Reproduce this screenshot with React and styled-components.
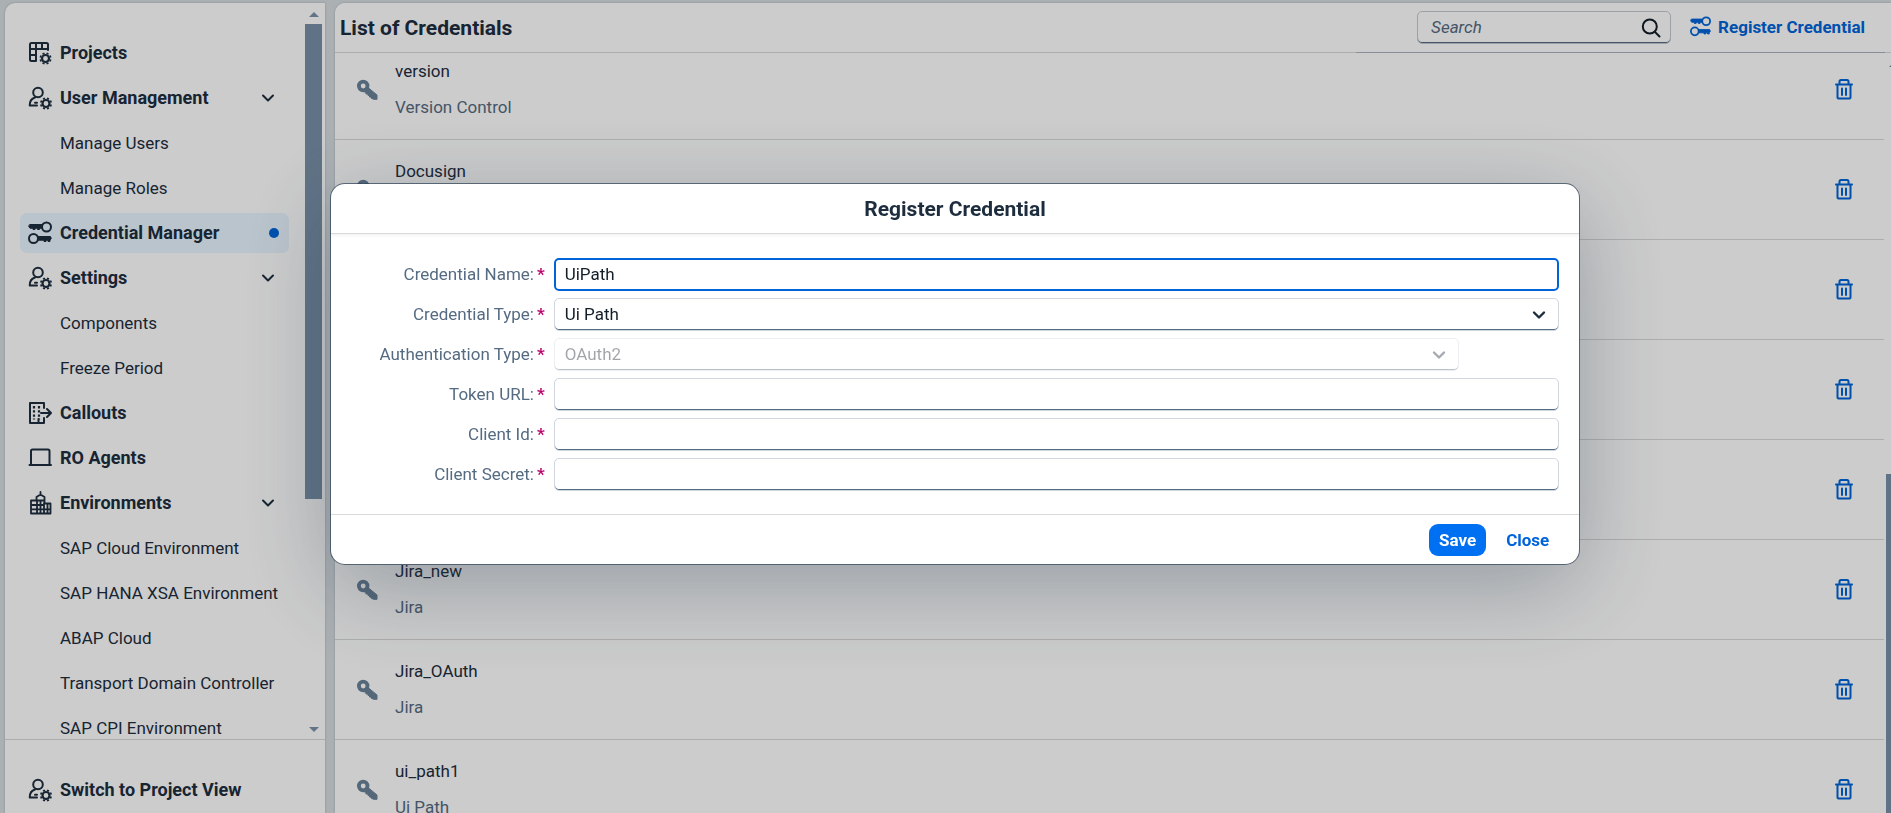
import React from "react";
import styled, { createGlobalStyle, css } from "styled-components";

const GlobalStyle = createGlobalStyle`
  *, *::before, *::after { box-sizing: border-box; }
  body {
    margin: 0;
    background: #d6dce0;
    color: #1d2d3e;
    font-family: Roboto, "Liberation Sans", sans-serif;
    font-size: 17px;
    line-height: 20px;
  }
  button, input, select { font: inherit; color: inherit; }
  ul { list-style: none; margin: 0; padding: 0; }
  h1, h2 { margin: 0; }
`;

/* ---------- icons ---------- */

const Svg = styled.svg`
  display: block;
  flex: none;
  width: ${(p) => p.$w || 24}px;
  height: ${(p) => p.$h || p.$w || 24}px;
  fill: none;
  stroke: currentColor;
  stroke-width: 2;
  stroke-linecap: round;
  stroke-linejoin: round;
`;

const Gear = ({ cx, cy }) => (
  <g transform={`translate(${cx} ${cy})`}>
    <circle r="3.5" strokeWidth="2.200" />
    <path
      strokeWidth="2.200"
      strokeLinecap="butt"
      d="M1.7 -4.1L2.3 -5.6M4.1 -1.7L5.6 -2.3M4.1 1.7L5.6 2.3M1.7 4.1L2.3 5.6M-1.7 4.1L-2.3 5.6M-4.1 1.7L-5.6 2.3M-4.1 -1.7L-5.6 -2.3M-1.7 -4.1L-2.3 -5.6"
    />
  </g>
);

const ProjectsIcon = () => (
  <Svg viewBox="0 0 24 24" aria-hidden="true">
    <path d="M8 20H3.500Q2 20 2 18.500V3.500Q2 2 3.500 2H18.500Q20 2 20 3.500V9M2 8H20M8 2V20M14 2V8M2 14H8" />
    <Gear cx={17.5} cy={17.5} />
  </Svg>
);

const UserIcon = () => (
  <Svg viewBox="0 0 24 24" aria-hidden="true">
    <circle cx="10" cy="6.500" r="4.800" />
    <path d="M7 11.500Q1.700 13 1.700 19.500H9M7 16.800H9" />
    <Gear cx={18} cy={17.5} />
  </Svg>
);

const KeysIcon = ({ size }) => (
  <Svg $w={size} viewBox="0 0 24 24" aria-hidden="true">
    <circle cx="18.500" cy="6" r="4.500" />
    <path fill="currentColor" strokeWidth="1" d="M2 3.500H14V7.200H11.500V8.500H9.500V7.200H7V8.500H5V7.200H2L.8 5.500Z" />
    <circle cx="5.500" cy="17.500" r="4.500" />
    <path fill="currentColor" strokeWidth="1" d="M10 15.500H22.500L23.300 17.500L22 19V20.500H20V19.200H18V20.500H16V19.200H10Z" />
  </Svg>
);

const CalloutsIcon = () => (
  <Svg viewBox="0 0 24 24" aria-hidden="true">
    <path d="M16 7V2H2V22H16V17M10.500 22V18M13 12H23M19 8L23 12L19 16" />
    <path strokeWidth="2.200" strokeDasharray="2.400 1.800" strokeLinecap="butt" d="M6 5V18.500M11 5V18.500" />
  </Svg>
);

const LaptopIcon = () => (
  <Svg viewBox="0 0 24 24" aria-hidden="true">
    <path d="M3 19V5Q3 3.500 4.500 3.500H20Q21.500 3.500 21.500 5V19M1.500 19H23" />
  </Svg>
);

const BuildingIcon = () => (
  <Svg viewBox="0 0 24 24" aria-hidden="true">
    <path d="M3 22.500V9.500H8.500V6L12.500 3.500L16.500 6V12.500H22.500V22.500ZM12.500 1V4M3 14H16M3 18.300H22.500M9 10V22M16 12V22M12.500 10V22M9 9.500H16M19.500 13V22" strokeWidth="1.800" />
  </Svg>
);

const ChevronIcon = ({ bold }) => (
  <Svg $w={14} $h={14} viewBox="0 0 14 14" aria-hidden="true">
    <path strokeWidth={bold ? 2.4 : 2} d="M2 4.500L7 9.500L12 4.500" />
  </Svg>
);

const KeyIcon = () => (
  <Svg $w={22} viewBox="0 0 22 22" aria-hidden="true">
    <circle cx="7.200" cy="8" r="4.300" strokeWidth="3.800" />
    <path fill="currentColor" strokeWidth="1" d="M8.500 12.800L12 9.500L21 17V21.300H17.500L15 20V19H13.500V17.500H12V16H10.500Z" />
  </Svg>
);

const TrashIcon = () => (
  <Svg $w={20} $h={22} viewBox="0 0 20 22" aria-hidden="true">
    <path d="M2 6.500H18M3.500 6.500V19.500Q3.500 20.500 4.500 20.500H15.500Q16.500 20.500 16.500 19.500V6.500M5.500 6V3.500Q5.500 2 7 2H13Q14.500 2 14.500 3.500V6M8 10.500V17M12 10.500V17" />
  </Svg>
);

const SearchIcon = () => (
  <Svg $w={20} viewBox="0 0 20 20" aria-hidden="true">
    <circle cx="8.800" cy="8.500" r="7" />
    <path d="M14 14L18.500 18.500" />
  </Svg>
);

/* ---------- page shell ---------- */

const Shell = styled.div`
  display: flex;
  gap: 10px;
  height: 100vh;
  padding: 3px 0 0 5px;
  overflow: hidden;
`;

const Sidebar = styled.nav`
  display: flex;
  flex-direction: column;
  flex: none;
  width: 320px;
  background: #fff;
  border-radius: 10px 0 0 0;
  box-shadow: 0 0 2px rgba(34, 53, 72, 0.3);
`;

const SideScroll = styled.div`
  display: flex;
  flex: 1;
  min-height: 0;
  overflow: hidden;
`;

const NavList = styled.ul`
  display: flex;
  flex-direction: column;
  gap: 5px;
  flex: 1;
  min-width: 0;
  padding: 30px 16px 0 15px;
`;

const NavLink = styled.a`
  display: flex;
  align-items: center;
  gap: 8px;
  height: 40px;
  padding: ${(p) => (p.$sub ? "0 0 0 40px" : "0 14px 0 8px")};
  border-radius: 7px;
  color: inherit;
  text-decoration: none;
  white-space: nowrap;
  font-size: ${(p) => (p.$sub ? 17 : 18)}px;
  font-weight: ${(p) => (p.$sub ? 400 : 700)};
  background: ${(p) => (p.$active ? "#e9f5ff" : "transparent")};
`;

const NavText = styled.span`
  flex: 1;
`;

const Dot = styled.span`
  width: 10px;
  height: 10px;
  margin-right: -4px;
  border-radius: 50%;
  background: #0064d9;
`;

const SideFooter = styled.div`
  flex: none;
  height: 74px;
  padding: 30px 15px 0;
  border-top: 1px solid #d9d9d9;
`;

const ScrollBar = styled.div`
  display: flex;
  flex-direction: column;
  align-items: center;
  flex: none;
  width: 20px;
  padding: 9px 3px 7px 0;
`;

const EdgeScrollBar = styled.div`
  display: flex;
  flex-direction: column;
  align-items: flex-start;
  flex: none;
  width: 5px;
  margin-left: 2px;
  padding-top: 9px;
  overflow: hidden;
`;

const Arrow = styled.span`
  flex: none;
  margin-left: ${(p) => (p.$inset || 0)}px;
  border: 5px solid transparent;
  border-top-width: ${(p) => (p.$down ? 5 : 0)}px;
  border-bottom-width: ${(p) => (p.$down ? 0 : 5)}px;
  border-${(p) => (p.$down ? "top" : "bottom")}-color: #7b91a8;
`;

const Thumb = styled.span`
  width: 17px;
  height: 66%;
  margin: 7px 0 auto;
  background: #7990a8;
`;

const LowerThumb = styled.span`
  width: 100%;
  flex: 1;
  margin-top: 407px;
  background: #7990a8;
`;

const Main = styled.main`
  display: flex;
  flex-direction: column;
  flex: 1;
  min-width: 0;
  background: #fff;
  border-radius: 10px 0 0 0;
  overflow: hidden;
  box-shadow: 0 0 2px rgba(34, 53, 72, 0.3);
`;

const MainHeader = styled.header`
  position: relative;
  z-index: 1;
  display: flex;
  align-items: center;
  flex: none;
  height: 50px;
  padding: 0 26px 0 5px;
  background: #fff;
  border-bottom: 1px solid #d9d9d9;
  &::after {
    content: "";
    position: absolute;
    right: 6px;
    bottom: -1px;
    width: 34%;
    height: 1px;
    background: #a8b2c0;
  }
`;

const PageTitle = styled.h1`
  flex: 1;
  font-size: 21px;
  line-height: 24px;
`;

const fieldBox = css`
  width: 100%;
  height: 33px;
  padding: 0 10px 2px;
  border: 1px solid #d0d7df;
  border-radius: 5px;
  background: transparent;
  box-shadow: inset 0 -1px #556b82;
  outline: none;
`;

const SearchBox = styled.div`
  display: flex;
  align-items: center;
  width: 254px;
  height: 33px;
  padding: 0 9px 0 0;
  margin-right: 19px;
  border: 1px solid #c3cad2;
  border-radius: 5px;
  box-shadow: inset 0 -1px #556b82;
  color: #131e29;
`;

const SearchInput = styled.input`
  flex: 1;
  min-width: 0;
  padding: 0 0 2px 13px;
  border: 0;
  background: none;
  outline: none;
  &::placeholder { color: #556b82; font-style: italic; opacity: 1; }
`;

const LinkButton = styled.button`
  display: flex;
  align-items: center;
  gap: 7px;
  padding: 0 0 2px;
  border: 0;
  background: none;
  color: #0064d9;
  font-weight: 700;
  white-space: nowrap;
`;

const ListArea = styled.div`
  display: flex;
  flex: 1;
  min-height: 0;
`;

const List = styled.ul`
  flex: 1;
  margin-top: -13px;
`;

const Row = styled.li`
  display: flex;
  align-items: center;
  height: 100px;
  padding: 0 30px 2px 21px;
  border-bottom: 1px solid #d9d9d9;
  color: #6b8299;
`;

const RowText = styled.div`
  display: flex;
  flex-direction: column;
  gap: 16px;
  flex: 1;
  padding-left: 17px;
`;

const RowName = styled.span`
  min-height: 20px;
  color: #1d2d3e;
`;

const RowKind = styled.span`
  min-height: 20px;
  color: #556b82;
`;

const IconButton = styled.button`
  display: flex;
  padding: 0;
  border: 0;
  background: none;
  color: #0064d9;
`;

/* ---------- dialog ---------- */

const Overlay = styled.div`
  position: fixed;
  inset: 0;
  z-index: 10;
  display: flex;
  align-items: flex-start;
  justify-content: center;
  padding: 184px 0 0 19px;
  background: rgba(0, 0, 0, 0.2);
`;

const Dialog = styled.section`
  width: 66.7%;
  background: #fff;
  border-radius: 14px;
  box-shadow: 0 0 0 1px rgba(45, 65, 85, 0.7), 0 22px 90px rgba(34, 53, 72, 0.32);
`;

const DialogTitle = styled.h2`
  height: 50px;
  border-bottom: 1px solid #d9d9d9;
  box-shadow: 0 2px 3px rgba(34, 53, 72, 0.06);
  font-size: 21px;
  line-height: 50px;
  text-align: center;
`;

const Form = styled.form`
  display: flex;
  flex-direction: column;
  gap: 7px;
  padding: 24px 20px 23px;
`;

const FormRow = styled.div`
  display: grid;
  grid-template-columns: 194px 1fr;
  column-gap: 9px;
  align-items: center;
`;

const Label = styled.label`
  padding-bottom: 2px;
  text-align: right;
  white-space: nowrap;
  color: #556b82;
`;

const Required = styled.span`
  padding-left: 3px;
  color: #ba066c;
  font-weight: 700;
`;

const TextInput = styled.input`
  ${fieldBox}
  color: #131e29;
  &:focus {
    padding: 0 9px 2px;
    border: 2px solid #0064d9;
    box-shadow: none;
  }
`;

const SelectWrap = styled.div`
  display: grid;
  align-items: center;
  width: ${(p) => (p.$narrow ? "90%" : "100%")};
  opacity: ${(p) => (p.$narrow ? 0.4 : 1)};
  & > * { grid-area: 1 / 1; }
  & > svg { justify-self: end; margin-right: 13px; pointer-events: none; }
`;

const SelectInput = styled.select`
  ${fieldBox}
  appearance: none;
  color: #131e29;
  opacity: 1;
`;

const DialogFooter = styled.footer`
  display: flex;
  justify-content: flex-end;
  gap: 10px;
  padding: 9px 20px 8px;
  border-top: 1px solid #d9d9d9;
`;

const DialogButton = styled.button`
  height: 32px;
  padding: 0 10px;
  border: 0;
  border-radius: 9px;
  font-weight: 700;
  background: ${(p) => (p.$primary ? "#0070f2" : "transparent")};
  color: ${(p) => (p.$primary ? "#fff" : "#0064d9")};
`;

/* ---------- data ---------- */

const NAV = [
  { text: "Projects", icon: <ProjectsIcon /> },
  { text: "User Management", icon: <UserIcon />, open: true },
  { text: "Manage Users" },
  { text: "Manage Roles" },
  { text: "Credential Manager", icon: <KeysIcon size={24} />, active: true },
  { text: "Settings", icon: <UserIcon />, open: true },
  { text: "Components" },
  { text: "Freeze Period" },
  { text: "Callouts", icon: <CalloutsIcon /> },
  { text: "RO Agents", icon: <LaptopIcon /> },
  { text: "Environments", icon: <BuildingIcon />, open: true },
  { text: "SAP Cloud Environment" },
  { text: "SAP HANA XSA Environment" },
  { text: "ABAP Cloud" },
  { text: "Transport Domain Controller" },
  { text: "SAP CPI Environment" },
];

const CREDENTIALS = [
  ["version", "Version Control"],
  ["Docusign", ""],
  ["", ""],
  ["", ""],
  ["", ""],
  ["Jira_new", "Jira"],
  ["Jira_OAuth", "Jira"],
  ["ui_path1", "Ui Path"],
];

const FIELDS = [
  { id: "name", label: "Credential Name:", value: "UiPath", focus: true },
  { id: "type", label: "Credential Type:", options: ["Ui Path"] },
  { id: "auth", label: "Authentication Type:", options: ["OAuth2"], disabled: true },
  { id: "url", label: "Token URL:" },
  { id: "client", label: "Client Id:" },
  { id: "secret", label: "Client Secret:" },
];

const NavItem = ({ item }) => (
  <NavLink href="#" $sub={!item.icon} $active={item.active}>
    {item.icon}
    <NavText>{item.text}</NavText>
    {item.open && <ChevronIcon />}
    {item.active && <Dot />}
  </NavLink>
);

const Field = ({ field }) => (
  <FormRow>
    <Label htmlFor={field.id}>
      {field.label}
      <Required>*</Required>
    </Label>
    {field.options ? (
      <SelectWrap $narrow={field.disabled}>
        <SelectInput id={field.id} disabled={field.disabled}>
          {field.options.map((o) => <option key={o}>{o}</option>)}
        </SelectInput>
        <ChevronIcon bold />
      </SelectWrap>
    ) : (
      <TextInput id={field.id} type="text" defaultValue={field.value} autoFocus={field.focus} />
    )}
  </FormRow>
);

export default function App() {
  return (
    <>
      <GlobalStyle />
      <Shell>
        <Sidebar>
          <SideScroll>
            <NavList>
              {NAV.map((item) => (
                <li key={item.text}><NavItem item={item} /></li>
              ))}
            </NavList>
            <ScrollBar>
              <Arrow />
              <Thumb />
              <Arrow $down />
            </ScrollBar>
          </SideScroll>
          <SideFooter>
            <NavItem item={{ text: "Switch to Project View", icon: <UserIcon /> }} />
          </SideFooter>
        </Sidebar>
        <Main>
          <MainHeader>
            <PageTitle>List of Credentials</PageTitle>
            <SearchBox>
              <SearchInput type="search" placeholder="Search" aria-label="Search" />
              <SearchIcon />
            </SearchBox>
            <LinkButton type="button">
              <KeysIcon size={21} />
              Register Credential
            </LinkButton>
          </MainHeader>
          <ListArea>
            <List>
              {CREDENTIALS.map(([name, kind], i) => (
                <Row key={i}>
                  <KeyIcon />
                  <RowText>
                    <RowName>{name}</RowName>
                    <RowKind>{kind}</RowKind>
                  </RowText>
                  <IconButton type="button" aria-label="Delete"><TrashIcon /></IconButton>
                </Row>
              ))}
            </List>
            <EdgeScrollBar>
              <Arrow $inset={3} />
              <LowerThumb />
            </EdgeScrollBar>
          </ListArea>
        </Main>
      </Shell>
      <Overlay>
        <Dialog role="dialog" aria-labelledby="dialog-title">
          <DialogTitle id="dialog-title">Register Credential</DialogTitle>
          <Form>
            {FIELDS.map((f) => <Field key={f.id} field={f} />)}
          </Form>
          <DialogFooter>
            <DialogButton type="button" $primary>Save</DialogButton>
            <DialogButton type="button">Close</DialogButton>
          </DialogFooter>
        </Dialog>
      </Overlay>
    </>
  );
}
